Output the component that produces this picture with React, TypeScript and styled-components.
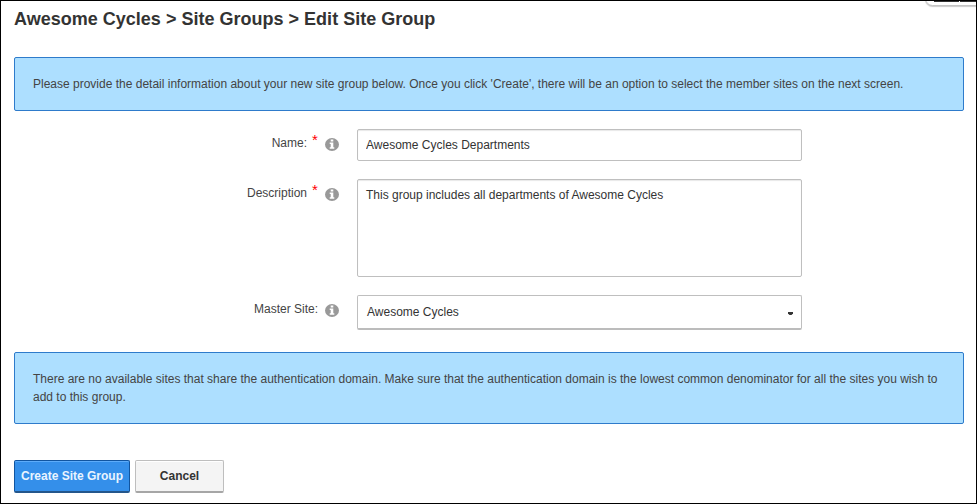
import React from "react";
import styled, { createGlobalStyle } from "styled-components";

const GlobalStyle = createGlobalStyle`
  *, *::before, *::after { box-sizing: border-box; }
  body { margin: 0; background: #fff; }
  input, textarea, button { font-family: "Liberation Sans", Arial, sans-serif; }
`;

const Page = styled.main`
  position: relative;
  width: 977px;
  height: 504px;
  overflow: hidden;
  border: 1px solid #000;
  padding: 0 12px 0 13px;
  background: #fff;
  color: #444;
  font: 12px/18px "Liberation Sans", Arial, sans-serif;
`;

const Heading = styled.h1`
  margin: 6px 0 0;
  height: 24px;
  color: #333;
  font-size: 18px;
  line-height: 24px;
  font-weight: bold;
  letter-spacing: 0.01px;
  white-space: nowrap;
`;

const CornerTab = styled.div`
  position: absolute;
  top: -10px;
  right: -12px;
  width: 63px;
  height: 15px;
  border: 1px solid #c4c4c4;
  border-radius: 9px;
  background: #fff;
  box-shadow: 0 1px 1px #ccc;

  &::after {
    content: "";
    position: absolute;
    right: 0;
    top: 9px;
    width: 53px;
    height: 1px;
    background: linear-gradient(90deg, #333 25px, #fff 25px, #fff 26px, #333 26px);
  }
`;

const Notice = styled.section<{ $top: number; $height: number }>`
  width: 950px;
  height: ${(p) => p.$height}px;
  margin-top: ${(p) => p.$top}px;
  padding: 17px 18px;
  border: 1px solid #2e7bcb;
  border-radius: 2px;
  background: #addfff;
`;

const Line = styled.span`
  display: block;
  white-space: nowrap;
`;

const Form = styled.form`
  display: flex;
  flex-direction: column;
  gap: 18px;
  margin-top: 18px;
`;

const Field = styled.div`
  display: grid;
  grid-template-columns: 325px 445px;
  column-gap: 18px;
`;

const LabelCell = styled.div`
  display: flex;
  justify-content: flex-end;
  height: 30px;
  padding-top: 5px;
`;

const Required = styled.span`
  width: 6px;
  margin: -3px 0 0 5px;
  color: #f00;
  font-size: 15px;
  line-height: 18px;
`;

const InfoIcon = styled.svg`
  width: 14px;
  height: 13px;
  margin: 4px 0 0 7px;
`;

const TextInput = styled.input`
  width: 445px;
  height: 32px;
  padding: 0 8px;
  border: 1px solid #bfbfbf;
  border-radius: 2px;
  outline: 0;
  box-shadow: inset 0 1px 1px #e8e8e8;
  color: #333;
  font-size: 12px;
`;

const TextArea = styled.textarea`
  display: block;
  width: 445px;
  height: 98px;
  padding: 6px 8px;
  border: 1px solid #bfbfbf;
  border-radius: 2px;
  outline: 0;
  resize: none;
  box-shadow: inset 0 1px 1px #e8e8e8;
  color: #333;
  font-size: 12px;
  line-height: 18px;
`;

const SelectBox = styled.button`
  display: flex;
  align-items: center;
  justify-content: space-between;
  width: 445px;
  height: 35px;
  padding: 0 8px 0 9px;
  border: 1px solid #bfbfbf;
  border-bottom: 2px solid #bcbcbc;
  border-radius: 2px;
  background: #fff;
  color: #333;
  font-size: 12px;
`;

const Caret = styled.svg`
  width: 5px;
  height: 3px;
  margin-top: 3px;
`;

const Actions = styled.footer`
  display: flex;
  gap: 5px;
  margin-top: 36px;
`;

const ActionButton = styled.button<{ $primary?: boolean }>`
  width: ${(p) => (p.$primary ? 116 : 89)}px;
  height: 33px;
  padding: 0;
  border: 1px solid ${(p) => (p.$primary ? "#1155a0" : "#bebebe")};
  border-bottom: 2px solid ${(p) => (p.$primary ? "#24568b" : "#a6a6a6")};
  border-radius: 2px;
  background: ${(p) => (p.$primary ? "#348fea" : "#f4f4f4")};
  box-shadow: inset 0 1px 0 ${(p) => (p.$primary ? "#5dacfa" : "#fff")};
  color: ${(p) => (p.$primary ? "#e9f4ff" : "#333")};
  font-size: 12px;
  font-weight: bold;
  white-space: nowrap;
`;

function Info() {
  return (
    <InfoIcon viewBox="0 0 14 13" aria-label="Information">
      <ellipse cx="7" cy="6.5" rx="7" ry="6.5" fill="#999" />
      <path d="M5.7 1.6h2.6v2H5.7zM4.7 4.6h3.6v4.6h1v1.5H4.7V9.2h1V6h-1z" fill="#fff" />
    </InfoIcon>
  );
}

function Label({ text, required }: { text: string; required?: boolean }) {
  return (
    <LabelCell>
      <label>{text}</label>
      {required && <Required>*</Required>}
      <Info />
    </LabelCell>
  );
}

export default function App() {
  return (
    <>
      <GlobalStyle />
      <Page>
        <CornerTab />
        <Heading>Awesome Cycles &gt; Site Groups &gt; Edit Site Group</Heading>
        <Notice $top={26} $height={54}>
          <Line>
            Please provide the detail information about your new site group below. Once you click
            'Create', there will be an option to select the member sites on the next screen.
          </Line>
        </Notice>
        <Form>
          <Field>
            <Label text="Name:" required />
            <TextInput defaultValue="Awesome Cycles Departments" />
          </Field>
          <Field>
            <Label text="Description" required />
            <TextArea defaultValue="This group includes all departments of Awesome Cycles" />
          </Field>
          <Field>
            <Label text="Master Site:" />
            <SelectBox type="button">
              Awesome Cycles
              <Caret viewBox="0 0 5 3">
                <path d="M0 0h5v1.5L3.5 3h-2L0 1.5z" fill="#333" />
              </Caret>
            </SelectBox>
          </Field>
        </Form>
        <Notice $top={22} $height={72}>
          <Line>
            There are no available sites that share the authentication domain. Make sure that the
            authentication domain is the lowest common denominator for all the sites you wish to
          </Line>
          <Line>add to this group.</Line>
        </Notice>
        <Actions>
          <ActionButton $primary>Create Site Group</ActionButton>
          <ActionButton>Cancel</ActionButton>
        </Actions>
      </Page>
    </>
  );
}
